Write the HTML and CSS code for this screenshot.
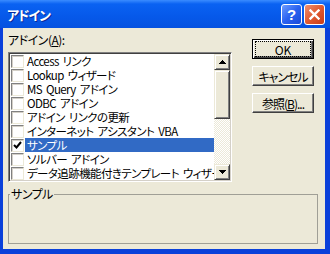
FILE: index.html
```html
<!DOCTYPE html>
<html lang="ja">

<head>
  <meta charset="UTF-8">
  <meta name="viewport" content="width=device-width, initial-scale=1.0">
  <title>アドイン</title>
  <link rel="stylesheet" href="styles.css">
</head>

<body>
  <div class="window">
    <div class="title-bar">
      <span class="title">アドイン</span>
      <div class="title-buttons">
        <span class="tb-btn help">?</span>
        <span class="tb-btn close">
          <svg width="11" height="11" viewBox="0 0 11 11">
            <path d="M1.5 1.5 L9.5 9.5 M9.5 1.5 L1.5 9.5" stroke="#fff" stroke-width="2.4" stroke-linecap="square" />
          </svg>
        </span>
      </div>
    </div>

    <div class="client">
      <div class="top-row">
        <div class="list-column">
          <div class="label">アドイン(<u>A</u>):</div>
          <div class="list-box">
            <ul class="items">
              <li class="item"><span class="check"></span><span class="name">Access リンク</span></li>
              <li class="item"><span class="check"></span><span class="name">Lookup ウィザード</span></li>
              <li class="item"><span class="check"></span><span class="name">MS Query アドイン</span></li>
              <li class="item"><span class="check"></span><span class="name">ODBC アドイン</span></li>
              <li class="item"><span class="check"></span><span class="name">アドイン リンクの更新</span></li>
              <li class="item"><span class="check"></span><span class="name">インターネット アシスタント VBA</span></li>
              <li class="item selected">
                <span class="check">
                  <svg width="9" height="9" viewBox="0 0 9 9">
                    <path d="M1 4 L3.5 6.5 L8 1" stroke="#000" stroke-width="2" fill="none" />
                  </svg>
                </span>
                <span class="name">サンプル</span>
              </li>
              <li class="item"><span class="check"></span><span class="name">ソルバー アドイン</span></li>
              <li class="item"><span class="check"></span><span class="name">データ追跡機能付きテンプレート ウィザード</span></li>
            </ul>
            <div class="scrollbar">
              <div class="sb-btn">
                <svg width="7" height="4" viewBox="0 0 7 4">
                  <path d="M3 0h1v1h1v1h1v1h1v1H0V3h1V2h1V1h1z" />
                </svg>
              </div>
              <div class="sb-thumb"></div>
              <div class="sb-track"></div>
              <div class="sb-btn">
                <svg width="7" height="4" viewBox="0 0 7 4">
                  <path d="M0 0h7v1H6v1H5v1H4v1H3V3H2V2H1V1H0z" />
                </svg>
              </div>
            </div>
          </div>
        </div>

        <div class="buttons">
          <button class="btn default"><span class="focus">OK</span></button>
          <button class="btn">キャンセル</button>
          <button class="btn">参照(<u>B</u>)...</button>
        </div>
      </div>

      <fieldset class="group">
        <legend>サンプル</legend>
      </fieldset>
    </div>
  </div>
</body>

</html>
```

FILE: styles.css
```css
body {
  margin: 0;
  font-family: "Noto Sans CJK JP", "Noto Sans", sans-serif;
  font-size: 12px;
  color: #000;
}

.window {
  width: 330px;
  height: 254px;
  display: flex;
  flex-direction: column;
  background-color: #0a40da;
}

/* Title bar */

.title-bar {
  height: 28px;
  flex: none;
  display: flex;
  align-items: center;
  justify-content: space-between;
  padding: 0 5px 0 7px;
  box-sizing: border-box;
  background: linear-gradient(#3a8cff 0, #0a62f2 4px, #0659ea 16px, #0552e0 28px);
}

.title {
  color: white;
  font-weight: bold;
  font-size: 13px;
  letter-spacing: -1px;
  text-shadow: 1px 1px #0a2a9a;
  font-feature-settings: "palt";
}

.title-buttons {
  display: flex;
  gap: 2px;
}

.tb-btn {
  width: 21px;
  height: 21px;
  box-sizing: border-box;
  border: 1px solid white;
  border-radius: 3px;
  display: flex;
  align-items: center;
  justify-content: center;
  color: white;
}

.help {
  background: linear-gradient(135deg, #6c9cff, #2a62f0 50%, #1a4ad8);
  font-family: "Liberation Sans", sans-serif;
  font-weight: bold;
  font-size: 15px;
}

.close {
  background: linear-gradient(135deg, #f09070, #e05a30 50%, #c83c18);
}

/* Client area */

.client {
  flex: 1;
  margin: 0 5px 5px 3px;
  padding: 4px 0 0 5px;
  background-color: #ece9d8;
}

.top-row {
  display: flex;
  gap: 20px;
}

.list-column {
  width: 224px;
}

.label {
  height: 16px;
  line-height: 16px;
  margin-bottom: 4px;
  letter-spacing: -0.5px;
  font-feature-settings: "palt";
}

.list-box {
  height: 130px;
  box-sizing: border-box;
  border: 1px solid;
  border-color: #808080 #fff #fff #808080;
  padding: 1px;
  box-shadow: inset 1px 1px #404040, inset -1px -1px #d4d0c8;
  display: flex;
}

.items {
  flex: 1;
  margin: 0;
  padding: 0;
  list-style: none;
  overflow: hidden;
  background-color: white;
}

.item {
  height: 14px;
  display: flex;
  align-items: center;
  white-space: nowrap;
}

.check {
  width: 13px;
  height: 13px;
  flex: none;
  box-sizing: border-box;
  margin: 0 1px 0 1px;
  border: 1px solid;
  border-color: #808080 #ece9d8 #ece9d8 #808080;
  box-shadow: inset 1px 1px #d4d0c8;
  background-color: white;
  display: flex;
  align-items: center;
  justify-content: center;
}

.name {
  padding: 0 2px;
  line-height: 14px;
  font-size: 11.5px;
  letter-spacing: -0.6px;
  word-spacing: 2px;
  font-feature-settings: "palt";
}

.selected .name {
  flex: 1;
  background-color: #316ac5;
  color: white;
}

.scrollbar {
  width: 16px;
  display: flex;
  flex-direction: column;
}

.sb-btn,
.sb-thumb {
  box-sizing: border-box;
  border: 1px solid;
  border-color: #ece9d8 #404040 #404040 #ece9d8;
  box-shadow: inset 1px 1px #fff, inset -1px -1px #808080;
  background-color: #ece9d8;
}

.sb-btn {
  height: 16px;
  display: flex;
  align-items: center;
  justify-content: center;
}

.sb-btn svg {
  shape-rendering: crispEdges;
}

.sb-thumb {
  height: 49px;
}

.sb-track {
  flex: 1;
  background: repeating-conic-gradient(#fff 0 25%, #ece9d8 0 50%) 0 0 / 2px 2px;
}

/* Buttons */

.buttons {
  display: flex;
  flex-direction: column;
  gap: 7px;
  margin-top: 7px;
}

.btn {
  width: 62px;
  height: 20px;
  padding: 0;
  font-family: inherit;
  font-size: 12px;
  letter-spacing: -1px;
  font-feature-settings: "palt";
  color: #000;
  background-color: #ece9d8;
  border: 1px solid;
  border-color: #fff #404040 #404040 #fff;
  box-shadow: inset -1px -1px #808080;
  display: flex;
  align-items: center;
  justify-content: center;
}

.btn.default {
  border-color: #000;
  letter-spacing: 0;
  box-shadow: inset 1px 1px #fff, inset -1px -1px #404040, inset -2px -2px #808080;
}

.focus {
  align-self: stretch;
  flex: 1;
  margin: 1px 2px;
  border: 1px dotted #000;
  display: flex;
  align-items: center;
  justify-content: center;
}

/* Group box */

.group {
  width: 310px;
  height: 57px;
  box-sizing: border-box;
  margin: 5px 0 0 0;
  padding: 0;
  border: 1px solid #a09f96;
}

.group legend {
  margin-left: 1px;
  padding: 0 1px;
  line-height: 14px;
  letter-spacing: -0.5px;
  font-feature-settings: "palt";
}
```
